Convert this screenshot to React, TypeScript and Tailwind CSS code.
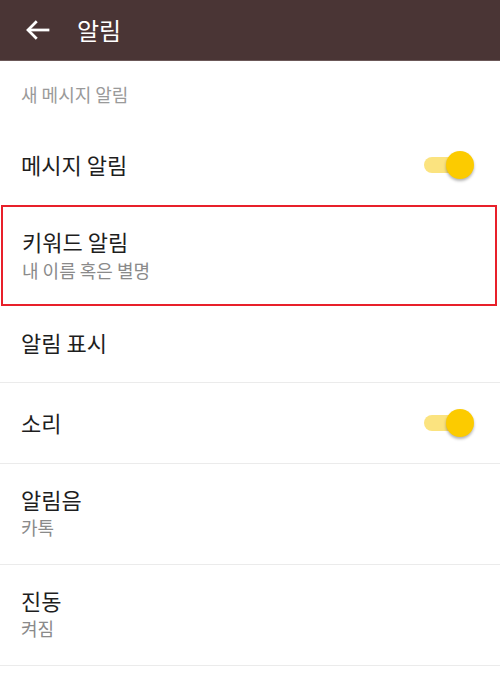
import React from "react";

const font = { fontFamily: '"Noto Sans CJK KR", "Noto Sans", Roboto, sans-serif' };

function Toggle() {
  return (
    <div className="relative w-[52px] h-[30px] mr-[24px] flex items-center">
      <div className="absolute left-0 top-[7px] w-[40px] h-[16px] rounded-full bg-[#fbe37f]" />
      <div className="absolute left-[22px] top-[1px] w-[28px] h-[28px] rounded-full bg-[#fccb00] shadow-[0_2px_3px_rgba(0,0,0,0.3)]" />
    </div>
  );
}

export default function App() {
  return (
    <div className="w-[500px] h-[690px] bg-white overflow-hidden" style={font}>
      <div className="h-[61px] bg-[#4a3535] flex items-center border-b border-[#6b5858]">
        <svg width="30" height="30" viewBox="0 0 24 24" className="ml-[23px]" fill="none" stroke="white" strokeWidth="2.2" strokeLinecap="square">
          <path d="M20 12H5" />
          <path d="M11 5l-7 7 7 7" strokeLinecap="butt" />
        </svg>
        <span className="ml-[24px] text-white text-[24px] leading-none">알림</span>
      </div>
      <div className="h-[63px] flex items-center pl-[21px] pt-[3px] text-[18px] text-[#9a9a9a]">새 메시지 알림</div>
      <div className="h-[81px] flex items-center justify-between pl-[21px]">
        <span className="text-[22px] text-[#1e1e1e]">메시지 알림</span>
        <Toggle />
      </div>
      <div className="h-[101px] ml-[1px] w-[496px] border-2 border-[#e8202a] flex flex-col justify-center pl-[19px]">
        <span className="text-[22px] leading-[29px] text-[#1e1e1e]">키워드 알림</span>
        <span className="text-[18px] leading-[29px] text-[#8a8a8a]">내 이름 혹은 별명</span>
      </div>
      <div className="h-[77px] flex items-center pl-[21px] pb-[3px] border-b border-[#ebebeb]">
        <span className="text-[22px] text-[#1e1e1e]">알림 표시</span>
      </div>
      <div className="h-[81px] flex items-center justify-between pl-[21px] pb-[1px] border-b border-[#ebebeb]">
        <span className="text-[22px] text-[#1e1e1e]">소리</span>
        <Toggle />
      </div>
      <div className="h-[101px] flex flex-col justify-center pl-[21px] pb-[3px] border-b border-[#ebebeb]">
        <span className="text-[22px] leading-[28px] text-[#1e1e1e]">알림음</span>
        <span className="text-[18px] leading-[28px] text-[#8a8a8a]">카톡</span>
      </div>
      <div className="h-[101px] flex flex-col justify-center pl-[21px] pb-[3px] border-b border-[#ebebeb]">
        <span className="text-[22px] leading-[28px] text-[#1e1e1e]">진동</span>
        <span className="text-[18px] leading-[28px] text-[#8a8a8a]">켜짐</span>
      </div>
    </div>
  );
}
